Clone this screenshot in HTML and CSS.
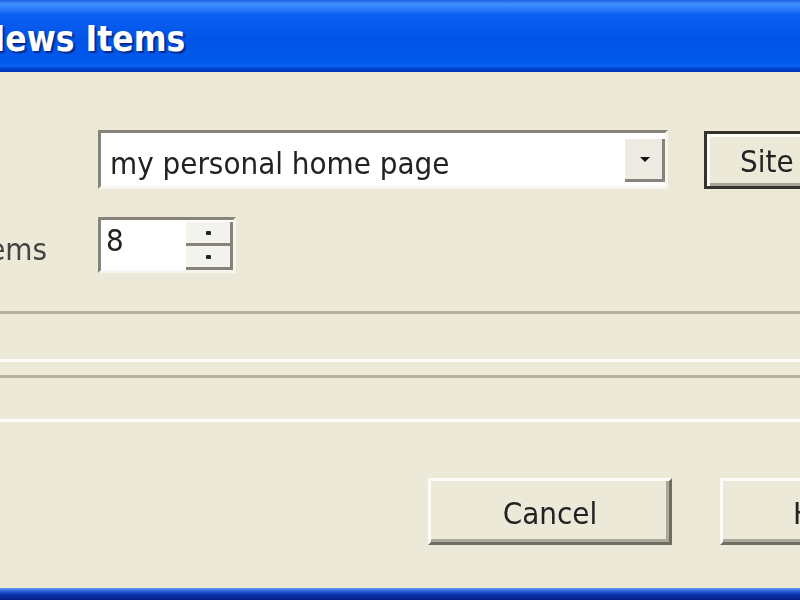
FILE: index.html
```html
<!DOCTYPE html>
<html lang="en">
<head>
    <meta charset="UTF-8">
    <title>News Items</title>
    <meta name="viewport" content="width=device-width, initial-scale=1">
    <link rel="stylesheet" href="styles.css">
</head>
<body>
    <div class="window">
        <div class="titlebar">
            <span class="title">News Items</span>
        </div>
        <div class="client">
            <div class="field-row row-site">
                <div class="field-label"></div>
                <div class="combo">
                    <span class="combo-text">my personal home page</span>
                    <span class="combo-arrow"><span class="arrow-down"></span></span>
                </div>
                <button class="btn btn-default btn-site">Site</button>
            </div>
            <div class="field-row row-count">
                <div class="field-label"><span class="label-text">Items</span></div>
                <div class="spin">
                    <span class="spin-value">8</span>
                    <span class="spin-buttons">
                        <span class="spin-up"><span class="dot"></span></span>
                        <span class="spin-down"><span class="dot"></span></span>
                    </span>
                </div>
            </div>
            <!-- etched separators -->
            <div class="rule rule-dark rule-1"></div>
            <div class="rule rule-light rule-2"></div>
            <div class="rule rule-dark rule-3"></div>
            <div class="rule rule-light rule-4"></div>
            <div class="button-row">
                <button class="btn btn-cancel">Cancel</button>
                <button class="btn btn-help">Help</button>
            </div>
        </div>
        <div class="frame-bottom"></div>
    </div>
</body>
</html>
```

FILE: styles.css
```css
html, body {
    margin: 0;
    padding: 0;
    width: 800px;
    height: 600px;
    overflow: hidden;
    background: #ece9d8;
}
.window {
    width: 800px;
    height: 600px;
    display: flex;
    flex-direction: column;
    font-family: "DejaVu Sans Condensed", "DejaVu Sans", sans-serif;
    font-size: 31px;
    color: #222;
    filter: blur(0.5px);
}

/* Title bar */
.titlebar {
    height: 72px;
    flex: none;
    background: linear-gradient(to bottom,
        #1d5fe0 0px, #3f90ff 4px, #2a7af8 9px, #0a5ef0 15px,
        #0055e8 40px, #0058ec 60px, #0a62f2 66px, #0040cc 69px, #0033b8 72px);
    display: flex;
    align-items: center;
    overflow: hidden;
}
.title {
    margin-left: -21px;
    margin-top: 6px;
    color: #fff;
    font-family: "DejaVu Sans Condensed", "DejaVu Sans", sans-serif;
    font-weight: bold;
    font-size: 35px;
    text-shadow: 2px 2px 1px #0a2a8a;
    white-space: nowrap;
}

/* Dialog client area */
.client {
    flex: 1;
    padding-top: 58px;
}
.field-row {
    display: flex;
    align-items: center;
}
.field-label {
    width: 98px;
    flex: none;
    overflow: hidden;
    white-space: nowrap;
}
.row-count {
    margin-top: 28px;
}
.label-text {
    display: inline-block;
    margin-left: -31px;
    padding-top: 8px;
    color: #444;
}

/* Combo box */
.combo {
    width: 564px;
    height: 53px;
    border: 3px solid;
    border-color: #86847a #f6f5f0 #f6f5f0 #86847a;
    background: #fff;
    display: flex;
    align-items: stretch;
    flex: none;
}
.combo-text {
    flex: 1;
    padding-left: 9px;
    padding-top: 6px;
    display: flex;
    align-items: center;
    white-space: nowrap;
}
.combo-arrow {
    width: 37px;
    margin: 6px 0 4px 0;
    background: #eeece2;
    border-right: 3px solid #86847a;
    border-bottom: 3px solid #86847a;
    display: flex;
    align-items: center;
    justify-content: center;
}
.arrow-down {
    width: 0;
    height: 0;
    border-left: 5px solid transparent;
    border-right: 5px solid transparent;
    border-top: 5px solid #111;
    margin-left: 2px;
}

/* Buttons */
.btn {
    font-family: inherit;
    font-size: 31px;
    color: #222;
    background: #ece9d8;
    padding: 0;
    cursor: default;
}
.btn-site {
    margin-left: 36px;
    width: 140px;
    height: 58px;
    flex: none;
    border: 3px solid #34332e;
    box-shadow: inset 3px 3px 0 #fcfcf8, inset -3px -3px 0 #a7a597;
    text-align: left;
    padding-left: 33px;
    padding-top: 2px;
}
.button-row {
    margin-top: 56px;
    display: flex;
    padding-left: 428px;
    gap: 48px;
}
.btn-cancel, .btn-help {
    width: 244px;
    height: 67px;
    flex: none;
    border: 3px solid;
    border-color: #fcfcf8 #6f6d62 #6f6d62 #fcfcf8;
    box-shadow: inset -3px -3px 0 #aca899;
    padding-top: 2px;
}
.btn-help {
    text-align: left;
    padding-left: 70px;
}

/* Spin box */
.spin {
    width: 132px;
    height: 50px;
    border: 3px solid;
    border-color: #86847a #f6f5f0 #f6f5f0 #86847a;
    background: #fff;
    display: flex;
    flex: none;
}
.spin-value {
    flex: 1;
    padding-left: 5px;
    line-height: 40px;
}
.spin-buttons {
    width: 44px;
    display: flex;
    flex-direction: column;
    margin-top: 2px;
    border-right: 3px solid #86847a;
}
.spin-up, .spin-down {
    flex: 1;
    background: #f3f2ec;
    border-bottom: 3px solid #86847a;
    display: flex;
    align-items: center;
    justify-content: center;
}
.dot {
    width: 5px;
    height: 4px;
    background: #222;
    border-radius: 1px;
}

/* Etched lines */
.rule {
    height: 3px;
}
.rule-dark {
    background: #b5b2a2;
}
.rule-light {
    background: #fdfdfa;
}
.rule-1 { margin-top: 38px; }
.rule-2 { margin-top: 45px; }
.rule-3 { margin-top: 13px; }
.rule-4 { margin-top: 41px; }

/* Bottom frame edge */
.frame-bottom {
    height: 12px;
    flex: none;
    background: linear-gradient(to bottom, #6f9cf2 0px, #2a5fd8 3px, #0a2fa8 7px, #06208a 12px);
}
```
